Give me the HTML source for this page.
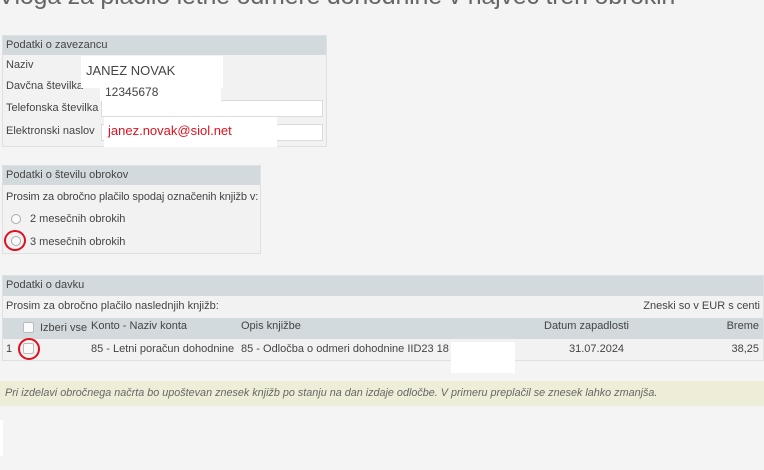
<!DOCTYPE html>
<html><head><meta charset="utf-8"><style>
*{margin:0;padding:0;box-sizing:border-box}
body{width:764px;height:470px;overflow:hidden;background:#f4f4f4;font-family:"Liberation Sans",sans-serif;font-size:11px;color:#444;position:relative}
.a{position:absolute;white-space:nowrap}
.box{position:absolute;border:1px solid #dde1e3;background:#f2f2f2}
.hd{position:absolute;background:#d3dadd}
.w{position:absolute;background:#fff}
.inp{position:absolute;background:#fff;border:1px solid #dcdcdc}
.rad{position:absolute;width:10px;height:10px;border:1px solid #aaa;border-radius:50%;background:#fafafa}
.cb{position:absolute;width:11px;height:11px;border:1px solid #bbb;background:#fafafa;border-radius:2px}
.ring{position:absolute;border:2.5px solid #e01020;border-radius:50%}
</style></head><body>
<div class="a" style="left:-2px;top:-18px;font-size:25px;color:#666;letter-spacing:-0.2px">Vloga za plačilo letne odmere dohodnine v največ treh obrokih</div>

<div class="box" style="left:2px;top:35px;width:325px;height:112px"></div>
<div class="hd" style="left:3px;top:36px;width:323px;height:19px"></div>
<div class="a" style="left:6px;top:39px">Podatki o zavezancu</div>
<div class="a" style="left:6px;top:59px">Naziv</div>
<div class="a" style="left:6px;top:80px">Davčna številka</div>
<div class="a" style="left:6px;top:102px">Telefonska številka</div>
<div class="a" style="left:6px;top:125px">Elektronski naslov</div>
<div class="inp" style="left:101px;top:100px;width:222px;height:17px"></div>
<div class="inp" style="left:101px;top:124px;width:222px;height:17px"></div>
<div class="w" style="left:81px;top:56px;width:142px;height:32px"></div>
<div class="w" style="left:100px;top:88px;width:121px;height:13px"></div>
<div class="w" style="left:104px;top:117px;width:173px;height:30px"></div>
<div class="a" style="left:86px;top:63px;font-size:13px;color:#444">JANEZ NOVAK</div>
<div class="a" style="left:105px;top:85px;font-size:12px;color:#444">12345678</div>
<div class="a" style="left:108px;top:123px;font-size:13px;color:#e0101e">janez.novak@siol.net</div>

<div class="box" style="left:2px;top:165px;width:259px;height:89px"></div>
<div class="hd" style="left:3px;top:166px;width:257px;height:19px"></div>
<div class="a" style="left:6px;top:169px">Podatki o številu obrokov</div>
<div class="a" style="left:6px;top:191px;letter-spacing:-0.1px">Prosim za obročno plačilo spodaj označenih knjižb v:</div>
<div class="rad" style="left:11px;top:214px"></div>
<div class="a" style="left:30px;top:213px">2 mesečnih obrokih</div>
<div class="rad" style="left:11px;top:236px"></div>
<div class="ring" style="left:4px;top:230px;width:22px;height:21px"></div>
<div class="a" style="left:30px;top:236px">3 mesečnih obrokih</div>

<div class="box" style="left:2px;top:275px;width:762px;height:86px"></div>
<div class="hd" style="left:3px;top:276px;width:760px;height:20px"></div>
<div class="a" style="left:6px;top:279px">Podatki o davku</div>
<div class="a" style="left:6px;top:300px">Prosim za obročno plačilo naslednjih knjižb:</div>
<div class="a" style="right:4px;top:300px">Zneski so v EUR s centi</div>
<div class="hd" style="left:3px;top:318px;width:760px;height:21px"></div>
<div class="cb" style="left:23px;top:322px"></div>
<div class="a" style="left:40px;top:322px">Izberi vse</div>
<div class="a" style="left:91px;top:320px">Konto - Naziv konta</div>
<div class="a" style="left:241px;top:320px">Opis knjižbe</div>
<div class="a" style="left:544px;top:320px">Datum zapadlosti</div>
<div class="a" style="right:5px;top:320px">Breme</div>
<div class="a" style="left:6px;top:343px">1</div>
<div class="cb" style="left:23px;top:343px"></div>
<div class="ring" style="left:18px;top:338px;width:22px;height:22px"></div>
<div class="a" style="left:91px;top:343px">85 - Letni poračun dohodnine</div>
<div class="a" style="left:241px;top:343px">85 - Odločba o odmeri dohodnine IID23 18</div>
<div class="a" style="left:569px;top:343px">31.07.2024</div>
<div class="a" style="right:5px;top:343px">38,25</div>
<div class="w" style="left:451px;top:342px;width:64px;height:31px"></div>

<div style="position:absolute;left:0;top:381px;width:764px;height:25px;background:#eeedd8"></div>
<div class="a" style="left:5px;top:387px;font-style:italic;font-size:10.8px;color:#666">Pri izdelavi obročnega načrta bo upoštevan znesek knjižb po stanju na dan izdaje odločbe. V primeru preplačil se znesek lahko zmanjša.</div>
<div class="w" style="left:0;top:420px;width:3px;height:36px"></div>
</body></html>
